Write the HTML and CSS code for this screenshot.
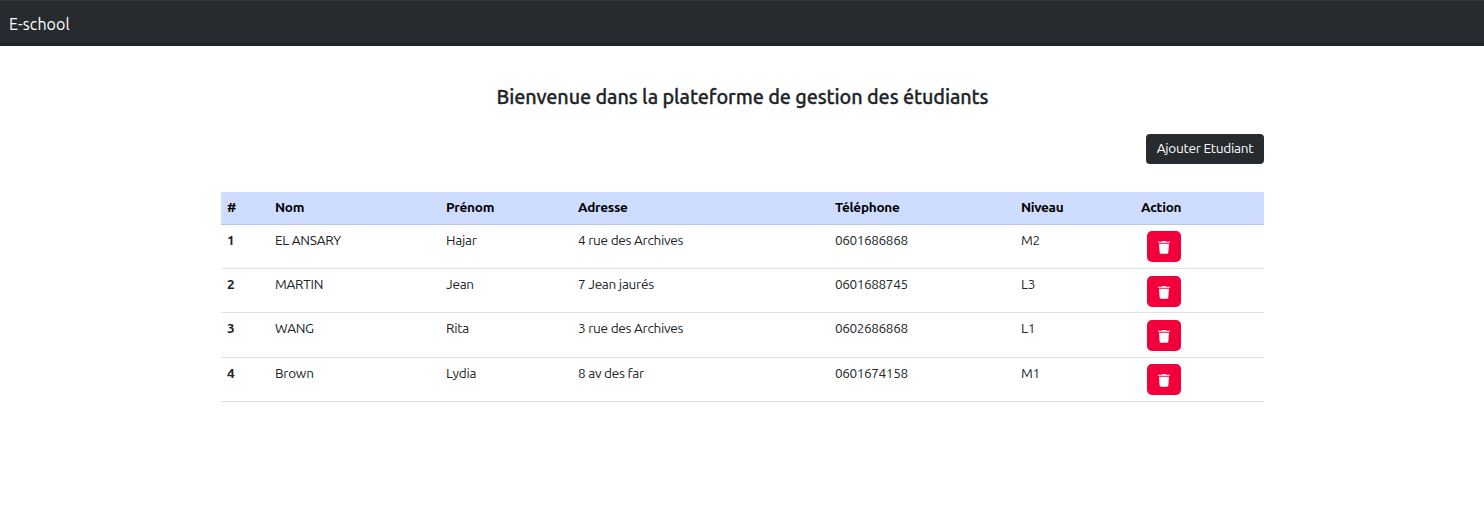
FILE: index.html
```html
<!DOCTYPE html>
<html lang="fr">
<head>
<meta charset="utf-8">
<title>E-school</title>
<link rel="stylesheet" href="styles.css">
</head>
<body>
<svg class="sprite" width="0" height="0" aria-hidden="true"><symbol id="trash" viewBox="0 0 14 16"><path d="M1 2.7h3.7l.6-.7h3.4l.6.7H13v1.1H1zM2 4.8h10l-.7 9a1.1 1.1 0 0 1-1.1 1H3.8a1.1 1.1 0 0 1-1.1-1z"/></symbol></svg>
<header class="navbar"><span class="brand">E-school</span></header>
<main class="container">
<h1 class="title">Bienvenue dans la plateforme de gestion des étudiants</h1>
<div class="toolbar"><button class="btn btn-dark">Ajouter Etudiant</button></div>
<table class="table">
<colgroup><col class="c-id"><col class="c-nom"><col class="c-prenom"><col class="c-adresse"><col class="c-tel"><col class="c-niveau"><col class="c-action"></colgroup>
<thead><tr><th>#</th><th>Nom</th><th>Prénom</th><th>Adresse</th><th>Téléphone</th><th>Niveau</th><th>Action</th></tr></thead>
<tbody>
<tr><th>1</th><td>EL ANSARY</td><td>Hajar</td><td>4 rue des Archives</td><td class="num">0601686868</td><td>M2</td><td><button class="btn btn-delete" aria-label="Supprimer"><svg class="icon"><use href="#trash"/></svg></button></td></tr>
<tr><th>2</th><td>MARTIN</td><td>Jean</td><td>7 Jean jaurés</td><td class="num">0601688745</td><td>L3</td><td><button class="btn btn-delete" aria-label="Supprimer"><svg class="icon"><use href="#trash"/></svg></button></td></tr>
<tr><th>3</th><td>WANG</td><td>Rita</td><td>3 rue des Archives</td><td class="num">0602686868</td><td>L1</td><td><button class="btn btn-delete" aria-label="Supprimer"><svg class="icon"><use href="#trash"/></svg></button></td></tr>
<tr><th>4</th><td>Brown</td><td>Lydia</td><td>8 av des far</td><td class="num">0601674158</td><td>M1</td><td><button class="btn btn-delete" aria-label="Supprimer"><svg class="icon"><use href="#trash"/></svg></button></td></tr>
</tbody>
</table>
</main>
</body>
</html>
```
FILE: styles.css
```css
* { box-sizing: border-box; }
body { margin: 0; background: #fff; color: #212529; font-family: Ubuntu, "Noto Sans", sans-serif; font-size: 13.6px; line-height: 20px; letter-spacing: -0.28px; }
.sprite { display: block; height: 0; }
.navbar { height: 46px; padding: 11px 9px 0; background: #272b2f; border-top: 1px solid #363636; border-bottom: 3px solid #212529; }
.brand { display: block; color: #fff; font-size: 16px; line-height: 24px; letter-spacing: 0.1px; }
.container { width: 1043px; margin-left: 221px; }
.title { margin: 0; padding-top: 38px; text-align: center; font-size: 19.8px; line-height: 26px; font-weight: 500; letter-spacing: -0.1px; -webkit-text-stroke: 0.3px currentColor; }
.toolbar { display: flex; justify-content: flex-end; padding: 24px 0 28px; }
.btn { display: flex; align-items: center; justify-content: center; margin: 0; padding: 0; border: 0; border-radius: 4px; font: inherit; letter-spacing: inherit; color: #fff; }
.btn-dark { width: 118px; height: 30px; padding-bottom: 2px; background: #272b2f; }
.table { width: 1043px; table-layout: fixed; border-collapse: separate; border-spacing: 0; }
.table th, .table td { padding: 5px 6px 0 7px; text-align: left; vertical-align: top; border-bottom: 1px solid #dee2e6; white-space: nowrap; }
.table thead th { height: 33px; background: #cddcff; color: #000; border-color: #b9c6e6; }
.table tbody tr { height: 44px; }
.table tbody tr:nth-child(3) { height: 45px; }
.table th { font-weight: 700; }
.table th:first-child { padding-left: 6px; }
.table .num { letter-spacing: -0.4px; }
.c-id { width: 47px; }
.c-nom { width: 171px; }
.c-prenom { width: 132px; }
.c-adresse { width: 257px; }
.c-tel { width: 186px; }
.c-niveau { width: 120px; }
.c-action { width: 130px; }
.btn-delete { width: 34px; height: 31px; margin: 1px 0 0 6px; border-radius: 5px; background: #f2003c; }
.table tr:nth-child(2) .btn-delete, .table tr:nth-child(3) .btn-delete { margin-top: 2px; }
.icon { width: 14px; height: 16px; fill: #fff; }
```
